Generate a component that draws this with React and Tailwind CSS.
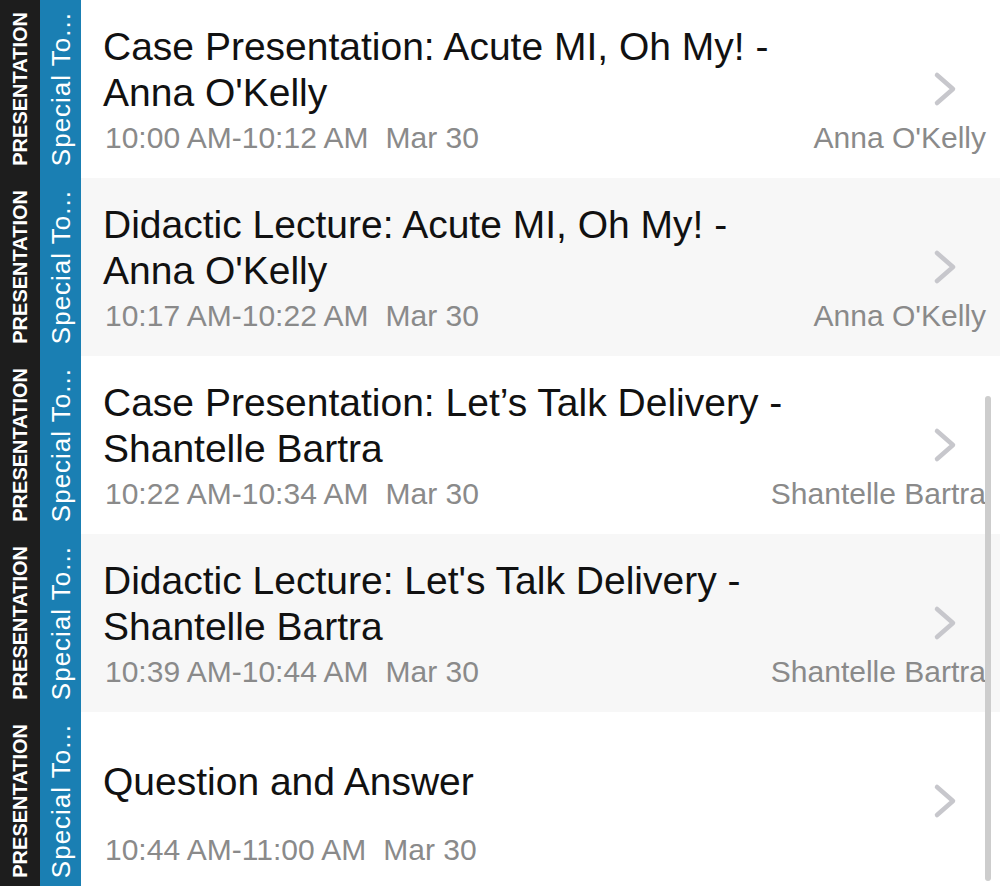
import React from "react";

const SESSIONS = [
  {
    title: ["Case Presentation: Acute MI, Oh My! -", "Anna O'Kelly"],
    time: "10:00 AM-10:12 AM",
    date: "Mar 30",
    speaker: "Anna O'Kelly",
  },
  {
    title: ["Didactic Lecture: Acute MI, Oh My! -", "Anna O'Kelly"],
    time: "10:17 AM-10:22 AM",
    date: "Mar 30",
    speaker: "Anna O'Kelly",
  },
  {
    title: ["Case Presentation: Let’s Talk Delivery -", "Shantelle Bartra"],
    time: "10:22 AM-10:34 AM",
    date: "Mar 30",
    speaker: "Shantelle Bartra",
  },
  {
    title: ["Didactic Lecture: Let's Talk Delivery -", "Shantelle Bartra"],
    time: "10:39 AM-10:44 AM",
    date: "Mar 30",
    speaker: "Shantelle Bartra",
  },
  {
    title: ["Question and Answer"],
    time: "10:44 AM-11:00 AM",
    date: "Mar 30",
    speaker: "",
  },
];

function Chevron() {
  return (
    <svg width="26" height="36" viewBox="0 0 26 36" fill="none">
      <polyline
        points="5,4 21,18 5,32"
        stroke="#c7c7cc"
        strokeWidth="4.5"
        strokeLinecap="round"
        strokeLinejoin="round"
      />
    </svg>
  );
}

function SessionRow({ session, shaded }) {
  return (
    <div className={`flex h-[178px] shrink-0 ${shaded ? "bg-[#f7f7f7]" : "bg-white"}`}>
      <div className="flex w-[40px] shrink-0 items-center justify-center bg-[#1d1d1d]">
        <span className="rotate-180 whitespace-nowrap text-[20px] font-bold leading-none text-white [writing-mode:vertical-rl]">
          PRESENTATION
        </span>
      </div>
      <div className="flex w-[41px] shrink-0 items-center justify-center bg-[#1a7fb3]">
        <span className="rotate-180 whitespace-nowrap text-[26px] leading-none tracking-[1px] text-white [writing-mode:vertical-rl]">
          Special To...
        </span>
      </div>
      <div className="relative flex flex-1 flex-col pl-[22px] pr-[14px] pt-[24px]">
        <div className="flex h-[92px] items-center">
          <div className="text-[39px] leading-[46px] text-[#111]">
            {session.title.map((line, i) => (
              <div key={i} className="whitespace-nowrap">
                {line}
              </div>
            ))}
          </div>
        </div>
        <div className="mt-[4px] flex h-[36px] items-center justify-between text-[30px] leading-[36px] text-[#8a8a8a]">
          <div className="whitespace-nowrap pl-[2px]">
            {session.time}
            <span className="ml-[17px]">{session.date}</span>
          </div>
          <div className="whitespace-nowrap">{session.speaker}</div>
        </div>
        <div className="absolute right-[42px] top-1/2 -translate-y-1/2">
          <Chevron />
        </div>
      </div>
    </div>
  );
}

export default function App() {
  return (
    <div className="relative h-[886px] w-[1000px] overflow-hidden bg-white font-['Liberation_Sans',Arial,sans-serif]">
      <div className="flex flex-col">
        {SESSIONS.map((s, i) => (
          <SessionRow key={i} session={s} shaded={i % 2 === 1} />
        ))}
      </div>
      <div className="absolute right-[9px] top-[396px] h-[485px] w-[6px] rounded-full bg-[#cdcdcd]" />
    </div>
  );
}
